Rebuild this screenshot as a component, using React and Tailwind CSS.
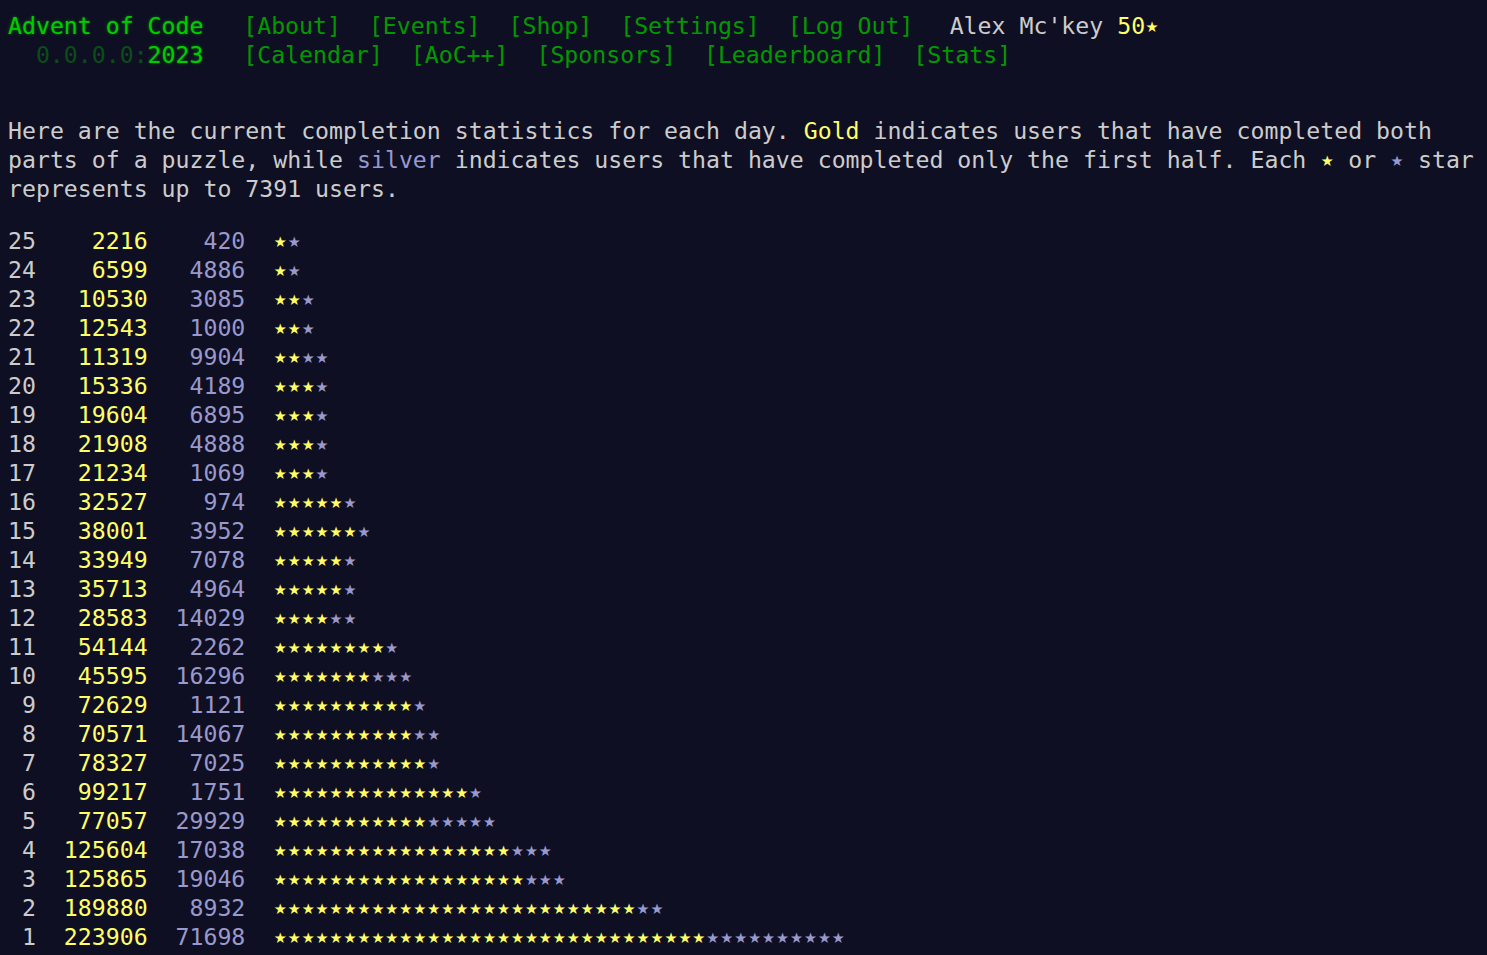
const PER_STAR = 7391;

const stats = [
  [25, 2216, 420],
  [24, 6599, 4886],
  [23, 10530, 3085],
  [22, 12543, 1000],
  [21, 11319, 9904],
  [20, 15336, 4189],
  [19, 19604, 6895],
  [18, 21908, 4888],
  [17, 21234, 1069],
  [16, 32527, 974],
  [15, 38001, 3952],
  [14, 33949, 7078],
  [13, 35713, 4964],
  [12, 28583, 14029],
  [11, 54144, 2262],
  [10, 45595, 16296],
  [9, 72629, 1121],
  [8, 70571, 14067],
  [7, 78327, 7025],
  [6, 99217, 1751],
  [5, 77057, 29929],
  [4, 125604, 17038],
  [3, 125865, 19046],
  [2, 189880, 8932],
  [1, 223906, 71698],
];

const glow = '[text-shadow:0_0_2px_#00cc0080,0_0_5px_#00cc0040]';

function Star({ silver }) {
  return (
    <span className={'inline-block w-[1ch] text-center ' + (silver ? 'text-[#9999cc]' : 'text-[#ffff66]')}>
      <span className="text-[14.5px] leading-none align-[2.5px] font-['DejaVu_Sans',sans-serif]">★</span>
    </span>
  );
}

function Stars({ count, silver }) {
  return Array.from({ length: count }, (_, i) => <Star key={i} silver={silver} />);
}

function NavLink({ children, first }) {
  return <a className={(first ? 'ml-[2.85ch] ' : 'ml-[2ch] ') + 'text-[#009900] no-underline'}>[{children}]</a>;
}

export default function App() {
  return (
    <div className="min-h-screen bg-[#0f0f23] pl-[8px] pt-[10.5px] text-[#cccccc] text-[23.2px] leading-[29px] font-['DejaVu_Sans_Mono',monospace]">
      <header>
        <div className="flex h-[29px] whitespace-pre">
          <h1 className={'w-[14ch] text-[#00cc00] font-normal ' + glow}>Advent of Code</h1>
          <NavLink first>About</NavLink>
          <NavLink>Events</NavLink>
          <NavLink>Shop</NavLink>
          <NavLink>Settings</NavLink>
          <NavLink>Log Out</NavLink>
          <div className="ml-[2.6ch]">
            Alex Mc'key <span className="text-[#ffff66]">50<Star /></span>
          </div>
        </div>
        <div className="flex h-[29px] whitespace-pre">
          <div className="w-[14ch] text-right">
            <span className="text-[#00cc00] opacity-[.33]">0.0.0.0:</span>
            <span className={'text-[#00cc00] ' + glow}>2023</span>
          </div>
          <NavLink first>Calendar</NavLink>
          <NavLink>AoC++</NavLink>
          <NavLink>Sponsors</NavLink>
          <NavLink>Leaderboard</NavLink>
          <NavLink>Stats</NavLink>
        </div>
      </header>

      <main className="mt-[47px]">
        <p className="whitespace-pre">
          Here are the current completion statistics for each day. <span className="text-[#ffff66]">Gold</span> indicates users that have completed both
          {'\n'}parts of a puzzle, while <span className="text-[#9999cc]">silver</span> indicates users that have completed only the first half. Each <Star /> or <Star silver /> star
          {'\n'}represents up to 7391 users.
        </p>

        <div className="mt-[23px] whitespace-pre">
          {stats.map(([day, gold, silver]) => (
            <div key={day} className="h-[29px]">
              <a className="text-[#cccccc]">{String(day).padStart(2)}</a>
              {'  '}
              <span className="text-[#ffff66]">{String(gold).padStart(6)}</span>
              {'  '}
              <span className="text-[#9999cc]">{String(silver).padStart(5)}</span>
              {'  '}
              <Stars count={Math.ceil(gold / PER_STAR)} />
              <Stars count={Math.ceil(silver / PER_STAR)} silver />
            </div>
          ))}
        </div>
      </main>
    </div>
  );
}
